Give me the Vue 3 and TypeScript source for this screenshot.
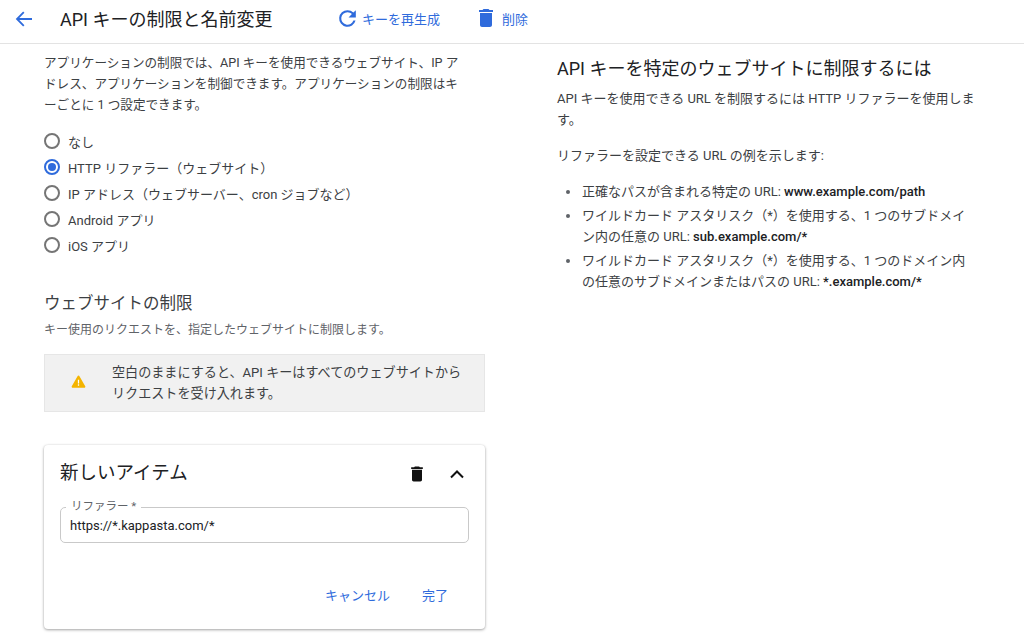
<script setup lang="ts">
const options = [
  { label: 'なし', checked: false },
  { label: 'HTTP リファラー（ウェブサイト）', checked: true },
  { label: 'IP アドレス（ウェブサーバー、cron ジョブなど）', checked: false },
  { label: 'Android アプリ', checked: false },
  { label: 'iOS アプリ', checked: false },
]
</script>

<template>
  <div class="page">
    <header class="topbar">
      <svg class="back" width="20" height="20" viewBox="0 0 20 20"><path d="M18 10H3.500M9.800 3.200 3 10l6.800 6.800" fill="none" stroke="#2f6bdc" stroke-width="1.800"/></svg>
      <h1 class="page-title">API キーの制限と名前変更</h1>
      <button class="action regen">
        <svg width="25" height="25" viewBox="0 0 24 24"><path fill="#2f6bdc" d="M17.650 6.350A7.960 7.960 0 0 0 12 4a8 8 0 1 0 7.730 10h-2.080A6 6 0 1 1 12 6c1.660 0 3.140.69 4.220 1.780L13 11h7V4l-2.350 2.350z"/></svg>
        <span>キーを再生成</span>
      </button>
      <button class="action del">
        <svg width="24" height="24" viewBox="0 0 24 24"><path fill="#2f6bdc" d="M6 19c0 1.100.9 2 2 2h8c1.100 0 2-.9 2-2V7H6v12zM19 4h-3.500l-1-1h-5l-1 1H5v2h14V4z"/></svg>
        <span>削除</span>
      </button>
    </header>

    <main class="columns">
      <section class="left">
        <p class="intro">アプリケーションの制限では、API キーを使用できるウェブサイト、IP アドレス、アプリケーションを制御できます。アプリケーションの制限はキーごとに 1 つ設定できます。</p>

        <div class="radios">
          <label v-for="o in options" :key="o.label" class="radio">
            <span class="dot" :class="{ on: o.checked }"></span>
            <span>{{ o.label }}</span>
          </label>
        </div>

        <h2 class="sub">ウェブサイトの制限</h2>
        <p class="hint">キー使用のリクエストを、指定したウェブサイトに制限します。</p>

        <div class="warn">
          <svg class="warn-icon" width="15" height="15" viewBox="0 0 24 24"><path fill="#f4b400" d="M12 2.500a1.800 1.800 0 0 1 1.560.9l9.200 16a1.800 1.800 0 0 1-1.560 2.700H2.800a1.800 1.800 0 0 1-1.560-2.700l9.200-16A1.800 1.800 0 0 1 12 2.500z"/><path fill="#fff" d="M11 9h2v6h-2zM11 16.500h2v2.200h-2z"/></svg>
          <p>空白のままにすると、API キーはすべてのウェブサイトからリクエストを受け入れます。</p>
        </div>

        <div class="card">
          <div class="card-head">
            <span class="card-title">新しいアイテム</span>
            <svg class="card-trash" width="20" height="20" viewBox="0 0 24 24"><path fill="#111" d="M6 19c0 1.100.9 2 2 2h8c1.100 0 2-.9 2-2V7H6v12zM19 4h-3.500l-1-1h-5l-1 1H5v2h14V4z"/></svg>
            <svg class="card-chev" width="24" height="24" viewBox="0 0 24 24"><path fill="none" stroke="#111" stroke-width="2" d="M6 15.500 12 9.500l6 6"/></svg>
          </div>
          <div class="field">
            <span class="field-label">リファラー *</span>
            <span class="field-value">https://*.kappasta.com/*</span>
          </div>
          <div class="card-actions">
            <button class="text-btn">キャンセル</button>
            <button class="text-btn">完了</button>
          </div>
        </div>
      </section>

      <aside class="right">
        <h2 class="help-title">API キーを特定のウェブサイトに制限するには</h2>
        <p class="help-p">API キーを使用できる URL を制限するには HTTP リファラーを使用します。</p>
        <p class="help-p second">リファラーを設定できる URL の例を示します:</p>
        <ul class="help-list">
          <li>正確なパスが含まれる特定の URL: <b>www.example.com/path</b></li>
          <li>ワイルドカード アスタリスク（*）を使用する、1 つのサブドメイン内の任意の URL: <b>sub.example.com/*</b></li>
          <li>ワイルドカード アスタリスク（*）を使用する、1 つのドメイン内の任意のサブドメインまたはパスの URL: <b>*.example.com/*</b></li>
        </ul>
      </aside>
    </main>
  </div>
</template>

<style>
html, body { margin: 0; background: #fff; overflow: hidden; }
</style>

<style scoped>
.page {
  width: 1024px;
  height: 640px;
  overflow: hidden;
  font-family: Roboto, "Noto Sans CJK JP", sans-serif;
  color: #3c4043;
  font-size: 13px;
}
p, h1, h2, ul { margin: 0; padding: 0; font-weight: 400; }
.topbar {
  display: flex;
  align-items: center;
  padding-left: 14px;
  padding-bottom: 7px;
  box-sizing: border-box;
  height: 44px;
  border-bottom: 1px solid #e3e3e3;
}
.back { margin-top: 2px; }
.page-title { font-size: 18px; color: #202124; margin-left: 26px; width: 275px; white-space: nowrap; }
.action {
  border: 0; background: none; padding: 0;
  display: flex; align-items: center; gap: 2px;
  font: inherit; color: #2f6bdc;
}
.del { margin-left: 34px; gap: 4px; }
.columns { display: flex; padding-left: 44px; }
.left { width: 441px; padding-top: 8px; }
.intro { line-height: 21px; width: 420px; font-size: 12.6px; }
.radios { display: flex; flex-direction: column; margin-top: 13px; }
.radio { height: 26px; display: flex; align-items: center; gap: 8px; }
.dot {
  border: 2px solid #757575; box-sizing: content-box; flex: none;
  width: 12px; height: 12px; border-radius: 50%;
  display: grid; place-items: center;
}
.dot.on { border-color: #2f6bdc; }
.dot.on::after { content: ""; width: 8px; height: 8px; border-radius: 50%; background: #2f6bdc; }
.sub { font-size: 16.500px; color: #3c4043; margin-top: 35px; line-height: 22px; }
.hint { font-size: 12px; color: #5f6368; margin-top: 6px; line-height: 18px; }
.warn {
  margin-top: 15px; height: 58px; background: #f1f1f1; border: 1px solid #e6e6e6;
  box-sizing: border-box; display: flex; align-items: center;
}
.warn-icon { margin-left: 26px; flex: none; margin-bottom: 4px; }
.warn p { margin-left: 26px; width: 355px; line-height: 21px; font-size: 13.1px; }
.card {
  margin-top: 33px; height: 184px; border-radius: 4px; background: #fff;
  box-shadow: 0 1px 3px rgba(0,0,0,.35), 0 0 2px rgba(0,0,0,.08);
  padding: 0 16px; box-sizing: border-box;
}
.card-head { height: 54px; display: flex; align-items: center; }
.card-title { font-size: 18.500px; color: #202124; flex: 1; margin-bottom: 3px; }
.card-trash { margin-right: 18px; margin-top: 4px; }
.card-chev { margin-top: 4px; }
.field {
  position: relative; height: 36px; box-sizing: border-box; border: 1px solid #c9c9c9; border-radius: 5px;
  margin-top: 8px; display: flex; align-items: center; padding-left: 9px;
}
.field-label {
  position: absolute; top: -9px; left: 5px; padding: 0 5px; background: #fff;
  font-size: 11.500px; line-height: 14px; color: #5f6368;
}
.field-value { color: #202124; font-size: 13px; }
.card-actions { display: flex; justify-content: flex-end; gap: 32px; margin-top: 44px; padding-right: 21px; }
.text-btn { border: 0; background: none; padding: 0; font: inherit; color: #2f6bdc; line-height: 18px; }
.right { width: 425px; margin-left: 72px; padding-top: 13px; }
.help-title { font-size: 18px; color: #202124; line-height: 24px; }
.help-p { margin-top: 7px; line-height: 21px; }
.help-p.second { margin-top: 15px; }
.help-list { list-style: none; margin-top: 15px; padding-left: 25px; width: 390px; }
.help-list li { position: relative; line-height: 21px; margin-bottom: 3px; }
.help-list li::before {
  content: ""; position: absolute; left: -16px; top: 9px; width: 4px; height: 4px; border-radius: 50%; background: #5f6368;
}
.help-list b { font-weight: 500; color: #202124; }
</style>
